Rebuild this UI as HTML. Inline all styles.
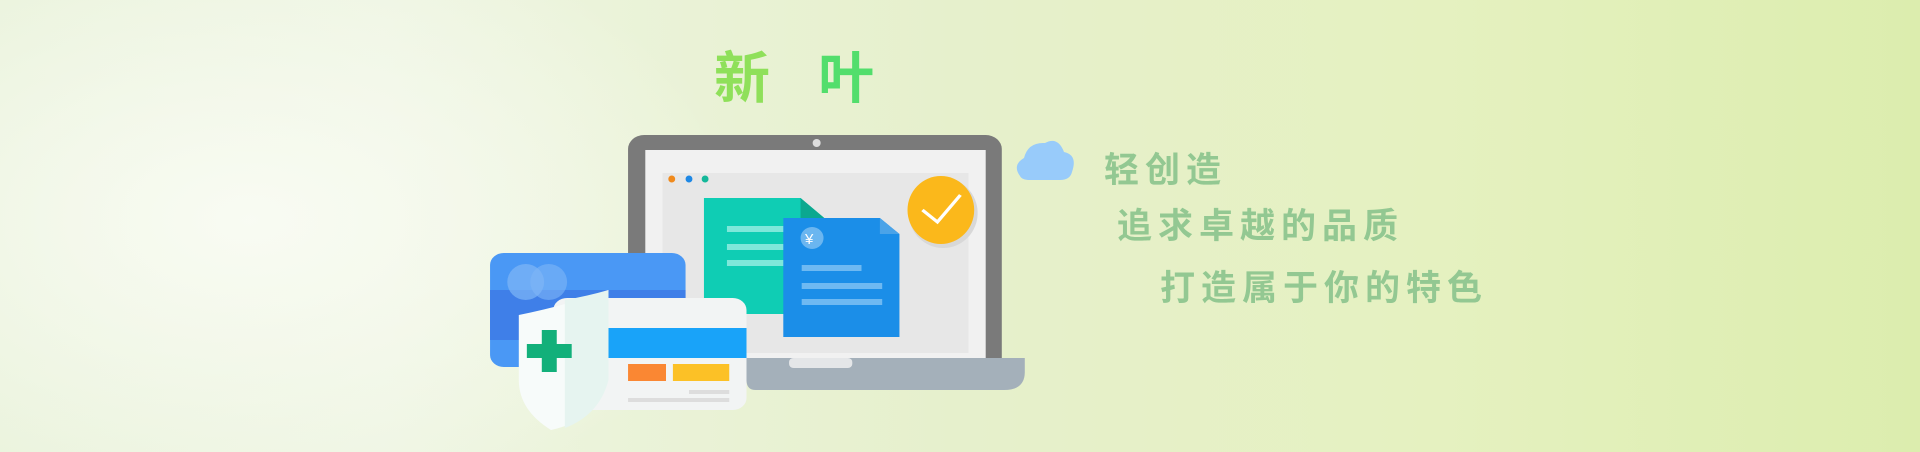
<!DOCTYPE html>
<html><head><meta charset="utf-8"><style>
html,body{margin:0;padding:0}
body{width:1920px;height:452px;overflow:hidden;position:relative;
background:radial-gradient(ellipse 500px 300px at 250px 220px,rgba(250,252,245,.9),rgba(250,252,245,0)),
linear-gradient(90deg,#eaf3dc 0%,#eef5e2 20%,#e6f0cc 50%,#e5f1c0 75%,#dcedae 100%);
font-family:"Liberation Sans","Noto Sans CJK SC",sans-serif}
.a{position:absolute}
.t{color:#93c892;font-weight:bold;letter-spacing:6px;font-size:35px;white-space:nowrap}
</style></head><body>
<div class="a" style="left:714px;top:34px;font-size:56px;font-weight:bold;color:#8fe05a;font-family:'WenQuanYi Zen Hei','Noto Sans CJK SC',sans-serif">新</div>
<div class="a" style="left:818px;top:34px;font-size:56px;font-weight:bold;color:#52de6c;font-family:'WenQuanYi Zen Hei','Noto Sans CJK SC',sans-serif">叶</div>
<svg class="a" style="left:0;top:0" width="1920" height="452">
<g transform="matrix(1.15,0,0,1,-70,0)">
<rect x="607" y="135" width="325" height="240" rx="14" fill="#7a7a7a"/>
<ellipse cx="771" cy="143" rx="3.5" ry="4" fill="#ddd"/>
<rect x="622" y="150" width="296" height="210" fill="#f1f1f1"/>
<rect x="637" y="173" width="266" height="180" fill="#e7e7e7"/>
<ellipse cx="645" cy="179" rx="3" ry="3.5" fill="#f08a1c"/><ellipse cx="660" cy="179" rx="3" ry="3.5" fill="#1e88e5"/><ellipse cx="674" cy="179" rx="3" ry="3.5" fill="#14b89a"/>
<polygon points="673,198 757,198 790,230 790,314 673,314" fill="#0fcdb4"/>
<polygon points="757,198 790,230 757,230" fill="#0ba88f"/>
<rect x="693" y="226" width="50" height="6" fill="#7ee8da"/><rect x="693" y="244" width="50" height="6" fill="#7ee8da"/><rect x="693" y="260" width="50" height="6" fill="#7ee8da"/>
<polygon points="742,218 826,218 843,234 843,337 742,337" fill="#1b8ee8"/>
<polygon points="826,218 843,234 826,234" fill="#4aa3e8"/>
<ellipse cx="767" cy="238" rx="10" ry="11" fill="#6bb6f0"/>
<rect x="758" y="265" width="52" height="6" fill="#6eb9f2"/><rect x="758" y="283" width="70" height="6" fill="#6eb9f2"/><rect x="758" y="299" width="70" height="6" fill="#6eb9f2"/>
<ellipse cx="881" cy="213" rx="30" ry="35" fill="#d8d8d8"/><ellipse cx="879" cy="210" rx="29" ry="34" fill="#fbb81b"/>
<polyline points="863,210 876,222 896,195" fill="none" stroke="#fff" stroke-width="3"/>
<path d="M710 358 H952 V372 Q952 390 934 390 H718 Q710 390 710 380Z" fill="#a4b0ba"/>
<rect x="747" y="358" width="55" height="10" rx="4" fill="#e4e6e8"/>
<rect x="487" y="253" width="170" height="114" rx="12" fill="#4a98f5"/>
<rect x="487" y="290" width="170" height="50" fill="#3f7fe8"/>
<ellipse cx="518" cy="282" rx="16" ry="18" fill="#7fb6f7" opacity=".7"/><ellipse cx="538" cy="282" rx="16" ry="18" fill="#7fb6f7" opacity=".6"/>
<rect x="542" y="298" width="168" height="112" rx="12" fill="#f2f4f4"/>
<rect x="590" y="328" width="120" height="30" fill="#19a3f9"/>
<rect x="607" y="364" width="33" height="17" fill="#fa8733"/><rect x="646" y="364" width="49" height="17" fill="#fcc126"/>
<rect x="660" y="390" width="35" height="4" fill="#ddd"/><rect x="607" y="398" width="88" height="4" fill="#ddd"/>
<path d="M512 315 Q555 305 590 290 V380 Q580 420 540 430 Q512 410 512 380Z" fill="#f7fbfa"/>
<path d="M552 300 Q572 296 590 290 V380 Q582 415 552 428Z" fill="#e6f4f0"/>
<path d="M532 330 h13 v14 h13 v14 h-13 v14 h-13 v-14 h-13 v-14 h13z" fill="#12b07a"/>
</g>
<text x="805" y="244" font-size="15" fill="#fff" font-family="Liberation Sans">¥</text>
<path d="M1020 176 Q1012 165 1024 158 Q1028 142 1045 143 Q1058 136 1064 152 Q1078 155 1072 172 Q1070 180 1060 180 H1030 Q1022 180 1020 176Z" fill="#98cbfa"/>
</svg>
<div class="a t" style="left:1104px;top:142px">轻创造</div>
<div class="a t" style="left:1117px;top:198px">追求卓越的品质</div>
<div class="a t" style="left:1160px;top:260px">打造属于你的特色</div>
</body></html>
